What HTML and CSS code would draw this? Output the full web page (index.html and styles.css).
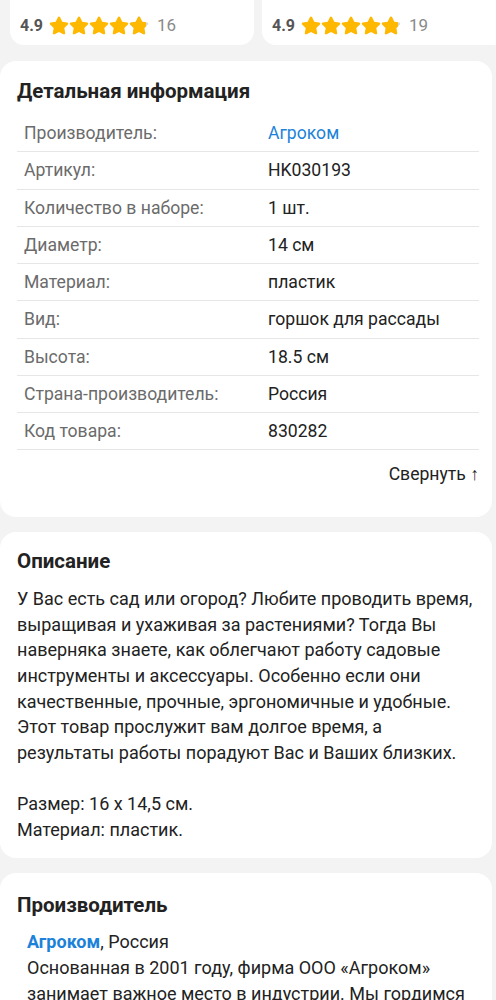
FILE: index.html
```html
<!DOCTYPE html>
<html lang="ru">
<head>
<meta charset="utf-8">
<link rel="stylesheet" href="styles.css">
</head>
<body>
<svg width="0" height="0" class="defs">
  <defs>
    <path id="star" d="M10 1.6c.5 0 .9.3 1.1.7l2.2 4.5 4.9.7c1 .1 1.4 1.4.7 2.1l-3.6 3.5.9 4.9c.2 1-.9 1.8-1.8 1.3L10 17l-4.4 2.3c-.9.5-2-.3-1.8-1.3l.9-4.9L1.1 9.6c-.7-.7-.3-2 .7-2.1l4.9-.7 2.2-4.5c.2-.4.6-.7 1.1-.7z"/>
    <clipPath id="part"><rect x="0" y="0" width="17" height="20"/></clipPath>
  </defs>
</svg>
<div class="reviews">
  <div class="rcard">
    <div class="rating">
      <span class="score">4.9</span>
      <span class="stars">
        <svg viewBox="0 0 20 20"><use href="#star"/></svg>
        <svg viewBox="0 0 20 20"><use href="#star"/></svg>
        <svg viewBox="0 0 20 20"><use href="#star"/></svg>
        <svg viewBox="0 0 20 20"><use href="#star"/></svg>
        <svg viewBox="0 0 20 20"><use href="#star" class="empty"/><use href="#star" clip-path="url(#part)"/></svg>
      </span>
      <span class="count">16</span>
    </div>
  </div>
  <div class="rcard">
    <div class="rating">
      <span class="score">4.9</span>
      <span class="stars">
        <svg viewBox="0 0 20 20"><use href="#star"/></svg>
        <svg viewBox="0 0 20 20"><use href="#star"/></svg>
        <svg viewBox="0 0 20 20"><use href="#star"/></svg>
        <svg viewBox="0 0 20 20"><use href="#star"/></svg>
        <svg viewBox="0 0 20 20"><use href="#star" class="empty"/><use href="#star" clip-path="url(#part)"/></svg>
      </span>
      <span class="count">19</span>
    </div>
  </div>
</div>

<section class="card details">
  <h2>Детальная информация</h2>
  <div class="table">
    <div class="row"><span class="label">Производитель:</span><span class="value link">Агроком</span></div>
    <div class="row"><span class="label">Артикул:</span><span class="value">HK030193</span></div>
    <div class="row"><span class="label">Количество в наборе:</span><span class="value">1 шт.</span></div>
    <div class="row"><span class="label">Диаметр:</span><span class="value">14 см</span></div>
    <div class="row"><span class="label">Материал:</span><span class="value">пластик</span></div>
    <div class="row"><span class="label">Вид:</span><span class="value">горшок для рассады</span></div>
    <div class="row"><span class="label">Высота:</span><span class="value">18.5 см</span></div>
    <div class="row"><span class="label">Страна-производитель:</span><span class="value">Россия</span></div>
    <div class="row"><span class="label">Код товара:</span><span class="value">830282</span></div>
  </div>
  <div class="collapse">Свернуть ↑</div>
</section>

<section class="card desc">
  <h2>Описание</h2>
  <p>У Вас есть сад или огород? Любите проводить время, выращивая и ухаживая за растениями? Тогда Вы наверняка знаете, как облегчают работу садовые инструменты и аксессуары. Особенно если они качественные, прочные, эргономичные и удобные. Этот товар прослужит вам долгое время, а результаты работы порадуют Вас и Ваших близких.<br><br>Размер: 16 х 14,5 см.<br>Материал: пластик.</p>
</section>

<section class="card maker">
  <h2>Производитель</h2>
  <div class="maker-body">
    <div><a class="brand">Агроком</a>, Россия</div>
    <p>Основанная в 2001 году, фирма ООО «Агроком» занимает важное место в индустрии. Мы гордимся нашей продукцией и качеством.</p>
  </div>
</section>
</body>
</html>
```

FILE: styles.css
```css
* { box-sizing: border-box; }
html, body { margin: 0; padding: 0; }
body {
  background: #f3f3f4;
  font-family: Roboto, "Noto Sans", Arial, sans-serif;
  color: #222;
  width: 496px;
  overflow: hidden;
}
.defs { position: absolute; }

.reviews {
  display: flex;
  gap: 8px;
  padding-left: 10px;
  height: 45px;
  margin-right: -20px;
}
.rcard {
  flex: 0 0 244px;
  background: #fff;
  border-radius: 0 0 14px 14px;
  display: flex;
  align-items: flex-end;
  padding: 0 10px 10px;
}
.rating { display: flex; align-items: center; height: 20px; }
.score { font-weight: 700; font-size: 16px; color: #555; width: 29px; }
.stars { display: flex; gap: 0; }
.stars svg { width: 20px; height: 20px; fill: #ffb800; display: block; }
.stars .empty { fill: #d9d9d9; }
.count { font-size: 17px; color: #8a8a8a; margin-left: 8px; }

.card {
  background: #fff;
  border-radius: 16px;
  width: 492px;
  padding: 18px 17px 16px;
}
.card h2 {
  margin: 0;
  font-size: 20.5px;
  line-height: 24px;
  font-weight: 700;
  color: #222;
}
.details { margin-top: 16px; padding-bottom: 31px; }
.table { margin-top: 12px; width: 462px; }
.row {
  display: grid;
  grid-template-columns: 251px 1fr;
  height: 37.25px;
  align-items: center;
  border-bottom: 1px solid #e6e6e6;
  font-size: 17.6px;
}
.label { padding-left: 7px; color: #6b6b6b; }
.value { color: #222; }
.link { color: #1c82d9; }
.collapse {
  margin-top: 12px;
  width: 462px;
  text-align: right;
  font-size: 17.6px;
  line-height: 24px;
  color: #222;
}

.desc { margin-top: 15px; padding-top: 17px; }
.desc p {
  margin: 13px 0 0;
  font-size: 18px;
  line-height: 25.6px;
  color: #222;
}

.maker { margin-top: 15px; padding-top: 20px; }
.maker-body {
  margin-top: 12px;
  padding-left: 10px;
  font-size: 18px;
  line-height: 26px;
}
.maker-body p { margin: 0; }
.brand { color: #1c82d9; font-weight: 700; }
```
